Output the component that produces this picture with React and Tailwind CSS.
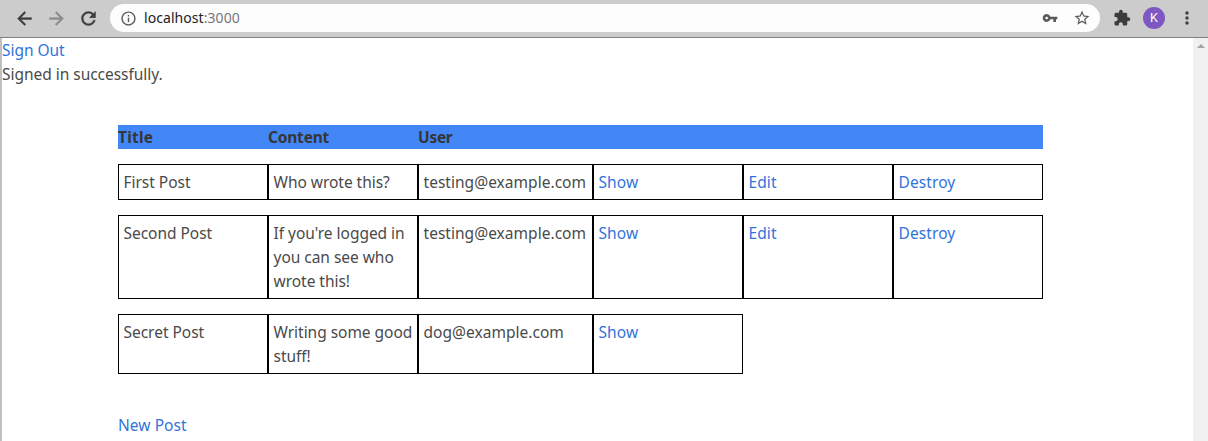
import {
  MdInfoOutline,
  MdVpnKey,
  MdStarBorder,
  MdExtension,
  MdMoreVert,
} from "react-icons/md";

const posts = [
  { title: "First Post", content: ["Who wrote this?"], user: "testing@example.com", actions: ["Show", "Edit", "Destroy"] },
  {
    title: "Second Post",
    content: ["If you're logged in", "you can see who", "wrote this!"],
    user: "testing@example.com",
    actions: ["Show", "Edit", "Destroy"],
  },
  { title: "Secret Post", content: ["Writing some good", "stuff!"], user: "dog@example.com", actions: ["Show"] },
];

const navPaths = {
  back: "M20 11H7.83l5.59-5.59L12 4l-8 8 8 8 1.41-1.41L7.83 13H20v-2z",
  forward: "M12 4l-1.41 1.41L16.17 11H4v2h12.17l-5.58 5.59L12 20l8-8z",
  reload:
    "M17.65 6.35A7.958 7.958 0 0 0 12 4c-4.42 0-7.99 3.58-7.99 8s3.57 8 7.99 8c3.73 0 6.84-2.55 7.73-6h-2.08A5.99 5.99 0 0 1 12 18c-3.31 0-6-2.69-6-6s2.69-6 6-6c1.66 0 3.14.69 4.22 1.78L13 11h7V4l-2.35 2.35z",
};

function NavIcon({ name, className }) {
  return (
    <svg viewBox="0 0 24 24" width="21" height="21" fill="currentColor" stroke="currentColor" strokeWidth="0.5" className={className}>
      <path d={navPaths[name]} />
    </svg>
  );
}

function Toolbar() {
  return (
    <header className="flex h-[38px] shrink-0 items-start border-b border-[#808080] bg-[#cccccc] pt-1 font-['Noto_Sans',sans-serif] text-[#3c3c3c]">
      <div className="flex h-7 w-[110px] items-center gap-[11px] pl-[13.5px]">
        <NavIcon name="back" />
        <NavIcon name="forward" className="text-[#8c8c8c]" />
        <NavIcon name="reload" />
      </div>
      <div className="flex h-7 w-[990px] items-center rounded-full bg-[#fdfdfd] pr-[9px] pl-[9.5px] text-[#5a5a5a]">
        <MdInfoOutline size={17} />
        <span className="ml-[7.5px] text-sm leading-5 tracking-[0.06px] text-[#777777]">
          <span className="text-[#202124]">localhost</span>:3000
        </span>
        <MdVpnKey size={16} className="ml-auto" />
        <MdStarBorder size={18} className="ml-[15px]" />
      </div>
      <div className="flex h-7 items-center pl-[13px]">
        <MdExtension size={18} />
        <span className="ml-3 flex size-[22px] items-center justify-center rounded-full bg-[#7e57c2] font-[Roboto,sans-serif] text-[12.5px] text-white">
          K
        </span>
        <MdMoreVert size={20} className="ml-[11.5px]" />
      </div>
    </header>
  );
}

function Cell({ children }) {
  return <div className="border border-black py-[5px] pl-[4.5px] whitespace-nowrap">{children}</div>;
}

function Link({ children }) {
  return (
    <a href="#" className="text-[#3273dc]">
      {children}
    </a>
  );
}

export default function App() {
  return (
    <div className="flex h-[441px] flex-col overflow-hidden bg-white">
      <Toolbar />
      <div className="flex min-h-0 flex-1">
        <div className="w-0.5 shrink-0 bg-[#c0c0c0]" />
        <main className="flex-1 font-['Noto_Sans',sans-serif] text-[15.5px] leading-6 tracking-[-0.03px] text-[#4a4a4a]">
          <div>
            <Link>Sign Out</Link>
          </div>
          <p>Signed in successfully.</p>
          <div className="mt-[39px] ml-[116px] flex w-[925px] flex-col gap-[15px]">
            <div className="grid grid-cols-[150px_150px_175px] bg-[#4287f5] font-bold text-[#363636]">
              <span className="tracking-[0.2px]">Title</span>
              <span className="tracking-[-0.2px]">Content</span>
              <span className="tracking-[-0.3px]">User</span>
            </div>
            {posts.map((post) => (
              <div key={post.title} className="grid grid-cols-[150px_150px_175px_150px_150px_150px]">
                <Cell>{post.title}</Cell>
                <Cell>
                  {post.content.map((line) => (
                    <div key={line}>{line}</div>
                  ))}
                </Cell>
                <Cell>
                  <span className="tracking-[0.03px]">{post.user}</span>
                </Cell>
                {post.actions.map((action) => (
                  <Cell key={action}>
                    <span className="tracking-[0.1px]">
                      <Link>{action}</Link>
                    </span>
                  </Cell>
                ))}
              </div>
            ))}
          </div>
          <div className="mt-[39px] ml-[116px] tracking-[0.05px]">
            <Link>New Post</Link>
          </div>
        </main>
        <div className="flex w-[15px] shrink-0 justify-center bg-[#f1f1f1] pt-1.5">
          <div className="size-0 border-x-4 border-b-4 border-x-transparent border-b-[#a3a3a3]" />
        </div>
      </div>
    </div>
  );
}
